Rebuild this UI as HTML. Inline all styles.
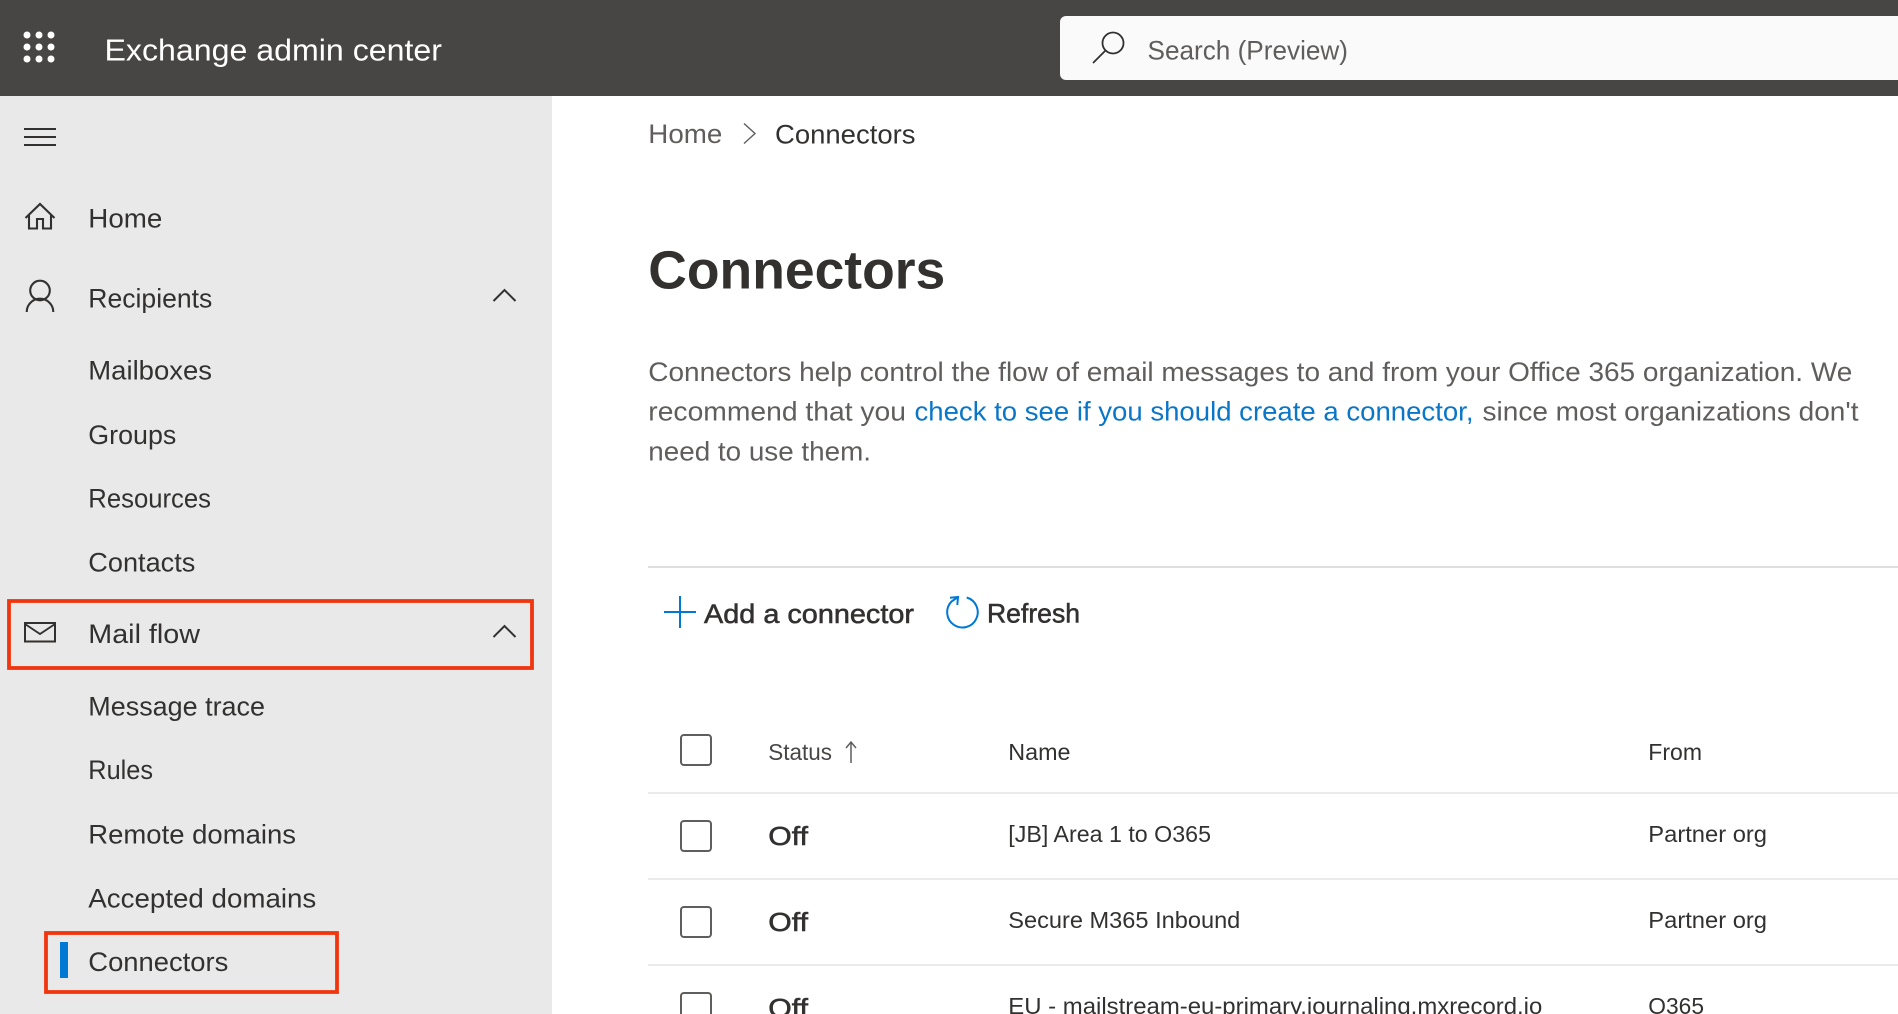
<!DOCTYPE html>
<html lang="en"><head><meta charset="utf-8"><title>Connectors - Exchange admin center</title>
<style>
html,body{margin:0;padding:0;width:1898px;height:1014px;overflow:hidden;background:#fff}
svg{display:block}
text{font-family:"Liberation Sans",Arial,sans-serif;font-size:27px;fill:#323130}
.g{fill:#605e5c}
.sb{stroke:#323130;stroke-width:.55px}
</style></head><body>
<svg width="1898" height="1014" viewBox="0 0 1898 1014" xmlns="http://www.w3.org/2000/svg">
<rect width="1898" height="1014" fill="#fff"/>
<rect y="96" width="552" height="918" fill="#e9e9e9"/>
<rect width="1898" height="96" fill="#484644"/>
<g fill="#fff"><circle cx="27" cy="35" r="3.500"/><circle cx="39" cy="35" r="3.500"/><circle cx="51" cy="35" r="3.500"/><circle cx="27" cy="47" r="3.500"/><circle cx="39" cy="47" r="3.500"/><circle cx="51" cy="47" r="3.500"/><circle cx="27" cy="59" r="3.500"/><circle cx="39" cy="59" r="3.500"/><circle cx="51" cy="59" r="3.500"/></g>
<text x="104.500" y="60.500" style="font-size:31px;fill:#fff" textLength="337.500" lengthAdjust="spacingAndGlyphs">Exchange admin center</text>
<path d="M1066 16H1898V80H1066a6 6 0 0 1-6-6V22a6 6 0 0 1 6-6z" fill="#fafafa"/>
<circle cx="1113" cy="43" r="10.500" fill="none" stroke="#323130" stroke-width="1.800"/><path d="M1105.500 50.500L1093 63" stroke="#323130" stroke-width="1.800" fill="none"/>
<text class="g" x="1147.500" y="59.500" textLength="200.500" lengthAdjust="spacingAndGlyphs">Search (Preview)</text>

<path d="M24 129H56M24 137H56M24 145H56" stroke="#323130" stroke-width="2" fill="none"/>
<path d="M25.500 218L40 204L54.500 218M29 215V228.500H37V219H43V228.500H51V215" stroke="#323130" stroke-width="2.100" fill="none"/>
<text x="88.300" y="227.500" textLength="74" lengthAdjust="spacingAndGlyphs">Home</text>
<circle cx="40" cy="290.500" r="9.800" fill="none" stroke="#323130" stroke-width="2.100"/>
<path d="M26.700 312A13.300 13.300 0 0 1 53.300 312" fill="none" stroke="#323130" stroke-width="2.100"/>
<text x="88.300" y="307.500" textLength="124" lengthAdjust="spacingAndGlyphs">Recipients</text>
<path d="M493.500 301L504.500 290L515.500 301" fill="none" stroke="#323130" stroke-width="2"/>
<text x="88.300" y="379.500" textLength="123.700" lengthAdjust="spacingAndGlyphs">Mailboxes</text>
<text x="88.300" y="444" textLength="88" lengthAdjust="spacingAndGlyphs">Groups</text>
<text x="88.300" y="507.500" textLength="122.700" lengthAdjust="spacingAndGlyphs">Resources</text>
<text x="88.300" y="571.500" textLength="107" lengthAdjust="spacingAndGlyphs">Contacts</text>
<rect x="25" y="623" width="30" height="18.500" fill="none" stroke="#323130" stroke-width="2"/><path d="M25 624L40 634L55 624" fill="none" stroke="#323130" stroke-width="1.900"/>
<text x="88.300" y="643" textLength="111.700" lengthAdjust="spacingAndGlyphs">Mail flow</text>
<path d="M493.500 637L504.500 626L515.500 637" fill="none" stroke="#323130" stroke-width="2"/>
<text x="88.300" y="715.500" textLength="176.700" lengthAdjust="spacingAndGlyphs">Message trace</text>
<text x="88.300" y="779" textLength="64.700" lengthAdjust="spacingAndGlyphs">Rules</text>
<text x="88.300" y="843.500" textLength="207.700" lengthAdjust="spacingAndGlyphs">Remote domains</text>
<text x="88.300" y="907.500" textLength="228" lengthAdjust="spacingAndGlyphs">Accepted domains</text>
<rect x="60" y="942" width="8" height="36" fill="#0078d4"/>
<text x="88.300" y="971" textLength="140" lengthAdjust="spacingAndGlyphs">Connectors</text>
<rect x="9" y="601" width="523" height="67" fill="none" stroke="#f0350f" stroke-width="3.800"/>
<rect x="46" y="933" width="291" height="59" fill="none" stroke="#f0350f" stroke-width="3.800"/>

<text class="g" x="648.300" y="143" textLength="74" lengthAdjust="spacingAndGlyphs">Home</text>
<path d="M744 123.500L755 133.500L744 143.500" fill="none" stroke="#605e5c" stroke-width="1.400"/>
<text x="775" y="143.500" textLength="140.500" lengthAdjust="spacingAndGlyphs">Connectors</text>
<text x="648.300" y="288.500" style="font-size:54px;font-weight:bold" textLength="297" lengthAdjust="spacingAndGlyphs">Connectors</text>
<text class="g" x="648.300" y="381" textLength="1204" lengthAdjust="spacingAndGlyphs">Connectors help control the flow of email messages to and from your Office 365 organization. We</text>
<text class="g" x="648.300" y="420.500" textLength="257.700" lengthAdjust="spacingAndGlyphs">recommend that you</text>
<text x="914.500" y="420.500" style="fill:#0a76c8" textLength="559" lengthAdjust="spacingAndGlyphs">check to see if you should create a connector,</text>
<text class="g" x="1482.500" y="420.500" textLength="376" lengthAdjust="spacingAndGlyphs">since most organizations don't</text>
<text class="g" x="648.300" y="460.500" textLength="222.700" lengthAdjust="spacingAndGlyphs">need to use them.</text>
<rect x="648" y="566" width="1250" height="2" fill="#e1dfdd"/>

<path d="M664 612H696M680 596V628" stroke="#0078d4" stroke-width="2" fill="none"/>
<text class="sb" x="704" y="623" textLength="210" lengthAdjust="spacingAndGlyphs">Add a connector</text>
<path d="M966.700 597.500A15.300 15.300 0 1 1 951.500 601.500L958 597" fill="none" stroke="#0078d4" stroke-width="2"/>
<path d="M950 597.700L958 597L957.300 605" fill="none" stroke="#0078d4" stroke-width="2"/>
<text class="sb" x="987" y="622.500" textLength="93" lengthAdjust="spacingAndGlyphs">Refresh</text>

<g fill="none" stroke="#605e5c" stroke-width="2"><rect x="681" y="735" width="30" height="30" rx="3"/><rect x="681" y="821" width="30" height="30" rx="3"/><rect x="681" y="907" width="30" height="30" rx="3"/><rect x="681" y="993" width="30" height="30" rx="3"/></g>
<text x="768.300" y="760" style="font-size:23px;fill:#484644" textLength="63.700" lengthAdjust="spacingAndGlyphs">Status</text>
<path d="M851 763V742M846 748L851 742L856 748" fill="none" stroke="#605e5c" stroke-width="1.500"/>
<text x="1008.300" y="760" style="font-size:23px" textLength="62.200" lengthAdjust="spacingAndGlyphs">Name</text>
<text x="1648.300" y="760" style="font-size:23px" textLength="53.700" lengthAdjust="spacingAndGlyphs">From</text>
<rect x="648" y="792" width="1250" height="2" fill="#edebe9"/>
<rect x="648" y="878" width="1250" height="2" fill="#edebe9"/>
<rect x="648" y="964" width="1250" height="2" fill="#edebe9"/>
<text class="sb" x="768.300" y="845" style="font-size:26px" textLength="39.700" lengthAdjust="spacingAndGlyphs">Off</text>
<text class="sb" x="768.300" y="931" style="font-size:26px" textLength="39.700" lengthAdjust="spacingAndGlyphs">Off</text>
<text class="sb" x="768.300" y="1017" style="font-size:26px" textLength="39.700" lengthAdjust="spacingAndGlyphs">Off</text>
<text x="1008.300" y="842" style="font-size:23px" textLength="202.700" lengthAdjust="spacingAndGlyphs">[JB] Area 1 to O365</text>
<text x="1008.300" y="928" style="font-size:23px" textLength="232" lengthAdjust="spacingAndGlyphs">Secure M365 Inbound</text>
<text x="1008.300" y="1014" style="font-size:23px" textLength="534" lengthAdjust="spacingAndGlyphs">EU - mailstream-eu-primary.journaling.mxrecord.io</text>
<text x="1648.300" y="842" style="font-size:23px" textLength="118.700" lengthAdjust="spacingAndGlyphs">Partner org</text>
<text x="1648.300" y="928" style="font-size:23px" textLength="118.700" lengthAdjust="spacingAndGlyphs">Partner org</text>
<text x="1648.300" y="1014" style="font-size:23px" textLength="55.700" lengthAdjust="spacingAndGlyphs">O365</text>
</svg>
</body></html>
